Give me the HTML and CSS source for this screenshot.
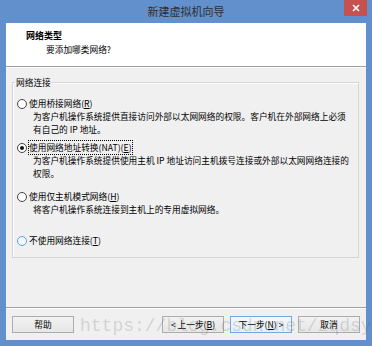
FILE: index.html
```html
<!DOCTYPE html>
<html lang="zh-CN">
<head>
<meta charset="utf-8">
<title>新建虚拟机向导</title>
<link rel="stylesheet" href="styles.css">
</head>
<body>
<div class="window">
  <div class="titlebar">
    <span></span>
    <span class="title">新建虚拟机向导</span>
    <button class="close" aria-label="关闭">
      <svg width="8" height="8" viewBox="0 0 8 8"><path d="M1 1L7 7M7 1L1 7" stroke="#fff" stroke-width="1.6"/></svg>
    </button>
  </div>
  <div class="client">
    <div class="header">
      <div class="h-title">网络类型</div>
      <div class="h-sub">要添加哪类网络?</div>
    </div>
    <div class="body">
      <fieldset class="group">
        <legend>网络连接</legend>
        <div class="opt opt1">
          <div class="radio-row"><span class="radio"></span><span class="label">使用桥接网络(<u>R</u>)</span></div>
          <div class="desc">为客户机操作系统提供直接访问外部以太网网络的权限。客户机在外部网络上必须<br>有自己的 IP 地址。</div>
        </div>
        <div class="opt opt2">
          <div class="radio-row"><span class="radio checked"></span><span class="label focus">使用网络地址转换(NAT)(<u>E</u>)</span></div>
          <div class="desc">为客户机操作系统提供使用主机 IP 地址访问主机拨号连接或外部以太网网络连接的<br>权限。</div>
        </div>
        <div class="opt opt3">
          <div class="radio-row"><span class="radio"></span><span class="label">使用仅主机模式网络(<u>H</u>)</span></div>
          <div class="desc">将客户机操作系统连接到主机上的专用虚拟网络。</div>
        </div>
        <div class="opt opt4">
          <div class="radio-row"><span class="radio hover"></span><span class="label">不使用网络连接(<u>T</u>)</span></div>
        </div>
      </fieldset>
    </div>
    <div class="footer">
      <button class="btn">帮助</button>
      <div class="spacer"></div>
      <button class="btn">&lt; 上一步(<u>B</u>)</button>
      <button class="btn default">下一步(<u>N</u>) &gt;</button>
      <button class="btn">取消</button>
    </div>
  </div>
  <div class="watermark">https://blog.csdn.net/zqdsy</div>
</div>
</body>
</html>
```

FILE: styles.css
```css
html, body {
  margin: 0;
  padding: 0;
  background: #6190cc;
}

.window {
  position: relative;
  width: 372px;
  height: 346px;
  box-sizing: border-box;
  padding: 0 6px 6px 6px;
  background: #6190cc;
  display: flex;
  flex-direction: column;
  font-family: "Noto Sans CJK SC", sans-serif;
  font-size: 8.7px;
  line-height: 13px;
  color: #000;
  overflow: hidden;
}

.titlebar {
  height: 23px;
  display: grid;
  grid-template-columns: 1fr auto 1fr;
  align-items: center;
}

.title {
  font-size: 11px;
  line-height: 23px;
  color: #2e2e2e;
}

.close {
  justify-self: end;
  align-self: start;
  margin-right: -1px;
  width: 23px;
  height: 16px;
  padding: 0;
  border: 0;
  background: #c75050;
  display: flex;
  align-items: center;
  justify-content: center;
}

.client {
  flex: 1;
  display: flex;
  flex-direction: column;
  background: #f0f0f0;
}

.header {
  height: 44px;
  box-sizing: border-box;
  background: #fff;
  border-bottom: 1px solid #a0a0a0;
  padding: 6px 0 0 20px;
}

.h-title {
  font-weight: bold;
  font-size: 9px;
}

.h-sub {
  padding-left: 20px;
  margin-top: 1px;
}

.body {
  flex: 1;
  padding-top: 8px;
  border-top: 1px solid #fff;
}

.group {
  margin: 0 7px 0 6px;
  padding: 8px 4px 10px 4px;
  border: 1px solid #d5d5d5;
  box-shadow: inset 1px 1px 0 #fff;
}

.group legend {
  padding: 0 1px;
  margin-left: -2px;
}

.opt2 { margin-top: 5px; }
.opt3 { margin-top: 10px; }
.opt4 { margin-top: 18px; }

.radio-row {
  display: flex;
  align-items: center;
  gap: 2px;
}

.radio {
  width: 10px;
  height: 10px;
  box-sizing: border-box;
  border-radius: 50%;
  border: 1px solid #444;
  background: #fff;
  display: flex;
  align-items: center;
  justify-content: center;
}

.radio.checked::after {
  content: "";
  width: 4px;
  height: 4px;
  border-radius: 50%;
  background: #111;
}

.radio.hover {
  border-color: #5aa0e6;
  background: #f4f9fe;
}

.label.focus {
  outline: 1px dotted #000;
  outline-offset: 0;
}

.desc {
  padding-left: 16px;
}

u {
  text-decoration: underline;
  text-underline-offset: 1px;
}

.footer {
  height: 33px;
  box-sizing: border-box;
  border-top: 1px solid #a0a0a0;
  box-shadow: inset 0 1px 0 #fff;
  padding: 8px 6px 0 6px;
  display: flex;
  align-items: flex-start;
  gap: 6px;
}

.spacer { flex: 1; }

.btn {
  width: 62px;
  height: 17px;
  padding: 0;
  box-sizing: border-box;
  border: 1px solid #acacac;
  background: linear-gradient(#f2f2f2, #e6e6e6);
  font-family: "Noto Sans CJK SC", sans-serif;
  font-size: 8.7px;
  line-height: 15px;
  color: #000;
}

.btn.default {
  border-color: #70aae6;
  background: linear-gradient(#f4f8fc, #e8eef5);
}

.watermark {
  position: absolute;
  left: 80px;
  top: 316px;
  font-family: "Liberation Mono", monospace;
  font-size: 18px;
  line-height: 20px;
  color: rgba(110, 110, 110, 0.24);
  white-space: nowrap;
  pointer-events: none;
}
```
